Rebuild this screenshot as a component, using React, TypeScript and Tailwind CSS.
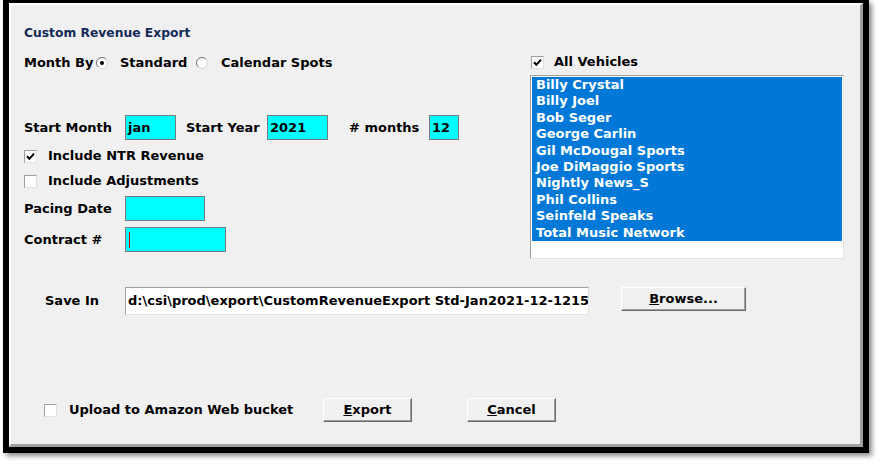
import type { ReactNode } from 'react'

const lbl = "font-['DejaVu_Sans',sans-serif] text-[13px] font-bold text-black whitespace-nowrap"

const vehicles = [
  'Billy Crystal',
  'Billy Joel',
  'Bob Seger',
  'George Carlin',
  'Gil McDougal Sports',
  'Joe DiMaggio Sports',
  'Nightly News_S',
  'Phil Collins',
  'Seinfeld Speaks',
  'Total Music Network',
]

function Check({ checked }: { checked?: boolean }) {
  return (
    <span className="flex h-[13px] w-[13px] shrink-0 items-center justify-center border border-t-[#a0a0a0] border-l-[#a0a0a0] border-r-[#e3e3e3] border-b-[#e3e3e3] bg-white">
      {checked && (
        <svg width="9" height="9" viewBox="0 0 9 9">
          <path d="M1 4.2 L3.4 6.8 L8 1.6" stroke="#000" strokeWidth="2" fill="none" />
        </svg>
      )}
    </span>
  )
}

function Radio({ checked }: { checked?: boolean }) {
  return (
    <svg width="12" height="12" viewBox="0 0 12 12" className="shrink-0">
      <circle cx="6" cy="6" r="5.5" fill="#fff" stroke="#d4d4d4" />
      <path d="M2.1 9.9 A5.5 5.5 0 0 1 9.9 2.1" stroke="#7a7a7a" fill="none" />
      {checked && <circle cx="6" cy="6" r="2" fill="#000" />}
    </svg>
  )
}

function Cyan({ className, children }: { className: string; children?: ReactNode }) {
  return (
    <div className={`flex h-[25px] shrink-0 items-center border border-[#7a7a7a] bg-[#00ffff] pl-[2px] ${lbl} ${className}`}>
      {children}
    </div>
  )
}

function WinBtn({ className, children }: { className: string; children: ReactNode }) {
  return (
    <div
      className={`flex h-[24px] shrink-0 items-center justify-center border border-t-white border-l-white border-r-[#696969] border-b-[#696969] bg-[#f0f0f0] shadow-[inset_-1px_-1px_0_#a0a0a0] ${lbl} ${className}`}
    >
      {children}
    </div>
  )
}

export default function App() {
  return (
    <div className="min-h-[467px] bg-white">
      <div className="ml-[3px] h-[453px] w-[866px] border-t-[3px] border-l-[6px] border-r-[6px] border-b-[6px] border-black shadow-[3px_3px_5px_rgba(0,0,0,0.45)]">
        <div className="h-full border-t-2 border-l-2 border-r-[3px] border-b-[3px] border-t-white border-l-white border-r-[#a0a0a0] border-b-[#a0a0a0] bg-[#f0f0f0]">
          <div className="flex items-start">
            {/* left side: options */}
            <div className="w-[506px] pl-[13px]">
              <div className="mt-[18px] flex h-5 items-center font-['DejaVu_Sans',sans-serif] text-[12.3px] font-bold text-[#132a58]">
                Custom Revenue Export
              </div>

              <div className={`mt-[10px] flex h-5 items-center ${lbl}`}>
                <span className="w-[72px]">Month By</span>
                <Radio checked />
                <span className="ml-[12px] w-[76px]">Standard</span>
                <Radio />
                <span className="ml-[13px]">Calendar Spots</span>
              </div>

              <div className={`mt-[42px] flex h-[25px] items-center ${lbl}`}>
                <span className="w-[101px]">Start Month</span>
                <Cyan className="w-[51px]">jan</Cyan>
                <span className="ml-[10px] w-[81px]">Start Year</span>
                <Cyan className="w-[61px]">2021</Cyan>
                <span className="ml-[21px] w-[80px]">
                  # months
                </span>
                <Cyan className="w-[30px]">12</Cyan>
              </div>

              <div className={`mt-[8px] flex h-4 items-center gap-[11px] ${lbl}`}>
                <Check checked />
                Include NTR Revenue
              </div>
              <div className={`mt-[9px] flex h-4 items-center gap-[11px] ${lbl}`}>
                <Check />
                Include Adjustments
              </div>

              <div className={`mt-[7px] flex h-[25px] items-center ${lbl}`}>
                <span className="w-[101px]">Pacing Date</span>
                <Cyan className="w-[80px]" />
              </div>
              <div className={`mt-[6px] flex h-[25px] items-center ${lbl}`}>
                <span className="w-[101px]">Contract #</span>
                <Cyan className="w-[101px]">
                  <span className="ml-px h-4 w-px bg-[#e00000]" />
                </Cyan>
              </div>
            </div>

            {/* right side: vehicles */}
            <div className="ml-[13px]">
              <div className={`mt-[49px] ml-px flex h-4 items-center gap-[10px] ${lbl}`}>
                <Check checked />
                All Vehicles
              </div>
              <div className="mt-[5px] h-[184px] w-[314px] border border-t-[#a0a0a0] border-l-[#a0a0a0] border-r-[#e3e3e3] border-b-[#e3e3e3] bg-white p-px">
                <div className="bg-[#0078d7]">
                  {vehicles.map((v) => (
                    <div key={v} className={`h-[16.4px] pl-[4px] leading-[16.4px] ${lbl} text-white`}>
                      {v}
                    </div>
                  ))}
                </div>
              </div>
            </div>
          </div>

          <div className={`mt-[28px] flex h-[28px] items-center pl-[34px] ${lbl}`}>
            <span className="w-[80px]">Save In</span>
            <div className="flex h-[28px] w-[464px] items-center overflow-hidden border border-t-[#a0a0a0] border-l-[#a0a0a0] border-r-[#e3e3e3] border-b-[#e3e3e3] bg-white pl-[2px]">
              {'d:\\csi\\prod\\export\\CustomRevenueExport Std-Jan2021-12-1215'}
            </div>
            <WinBtn className="mt-[-4px] ml-[32px] w-[125px]">
              <span>
                <span className="underline">B</span>rowse...
              </span>
            </WinBtn>
          </div>

          <div className={`mt-[83px] flex h-[24px] items-center pl-[33px] ${lbl}`}>
            <div className="flex w-[279px] items-center gap-[12px]">
              <Check />
              Upload to Amazon Web bucket
            </div>
            <WinBtn className="w-[89px]">
              <span>
                <span className="underline">E</span>xport
              </span>
            </WinBtn>
            <WinBtn className="ml-[55px] w-[89px]">
              <span>
                <span className="underline">C</span>ancel
              </span>
            </WinBtn>
          </div>
        </div>
      </div>
    </div>
  )
}
